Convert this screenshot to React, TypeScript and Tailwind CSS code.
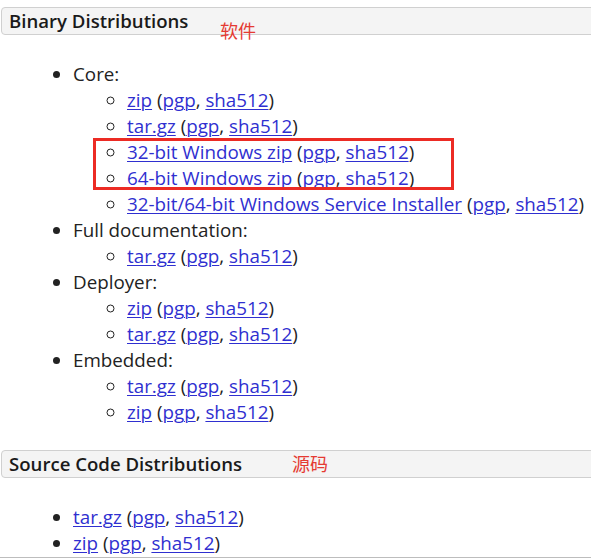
import React from 'react';

type Item = { label: string; sub?: string[] };

const link = 'text-[#2f2fd0] underline underline-offset-2 decoration-1';

function Files({ name }: { name: string }) {
  return (
    <>
      <a className={link}>{name}</a> (<a className={link}>pgp</a>, <a className={link}>sha512</a>)
    </>
  );
}

const binary: Item[] = [
  { label: 'Core:', sub: ['zip', 'tar.gz', '32-bit Windows zip', '64-bit Windows zip', '32-bit/64-bit Windows Service Installer'] },
  { label: 'Full documentation:', sub: ['tar.gz'] },
  { label: 'Deployer:', sub: ['zip', 'tar.gz'] },
  { label: 'Embedded:', sub: ['tar.gz', 'zip'] },
];

function Header({ title, note, notePos }: { title: string; note: string; notePos: string }) {
  return (
    <div className="relative ml-[1px] flex h-[28px] w-[640px] items-center rounded-l-[4px] border border-[#d0d0d0] bg-[#f4f4f4] pl-[7px] text-[18.6px] font-semibold text-[#1a1a1a]">
      {title}
      <span className={`absolute ${notePos} font-['Noto_Sans_CJK_SC',sans-serif] text-[18px] font-normal leading-none text-[#e53a32]`}>
        {note}
      </span>
    </div>
  );
}

export default function App() {
  return (
    <div className="h-[558px] w-[591px] overflow-hidden bg-white font-['Open_Sans','Noto_Sans_CJK_SC',sans-serif] text-[18.8px] leading-[26px] text-[#222]">
      <div className="pt-[7px]">
        <Header title="Binary Distributions" note="软件" notePos="left-[218px] top-[13px]" />
        <ul className="mt-[26px] list-disc pl-[73px]">
          {binary.map((item) => (
            <li key={item.label}>
              {item.label}
              <ul className="relative list-[circle] pl-[54px]">
                {item.sub?.map((s) => (
                  <li key={s}>
                    <Files name={s} />
                  </li>
                ))}
                {item.label === 'Core:' && (
                  <div className="pointer-events-none absolute left-[20px] top-[51px] h-[52px] w-[361px] border-[3px] border-[#ec2b24]" />
                )}
              </ul>
            </li>
          ))}
        </ul>
        <div className="mt-[25px]">
          <Header title="Source Code Distributions" note="源码" notePos="left-[290px] top-[3px]" />
        </div>
        <ul className="mt-[26px] list-disc pl-[73px]">
          <li>
            <Files name="tar.gz" />
          </li>
          <li>
            <Files name="zip" />
          </li>
        </ul>
      </div>
      <div className="mt-[1px] h-[2px] w-full bg-[#bdbdbd]" />
    </div>
  );
}
